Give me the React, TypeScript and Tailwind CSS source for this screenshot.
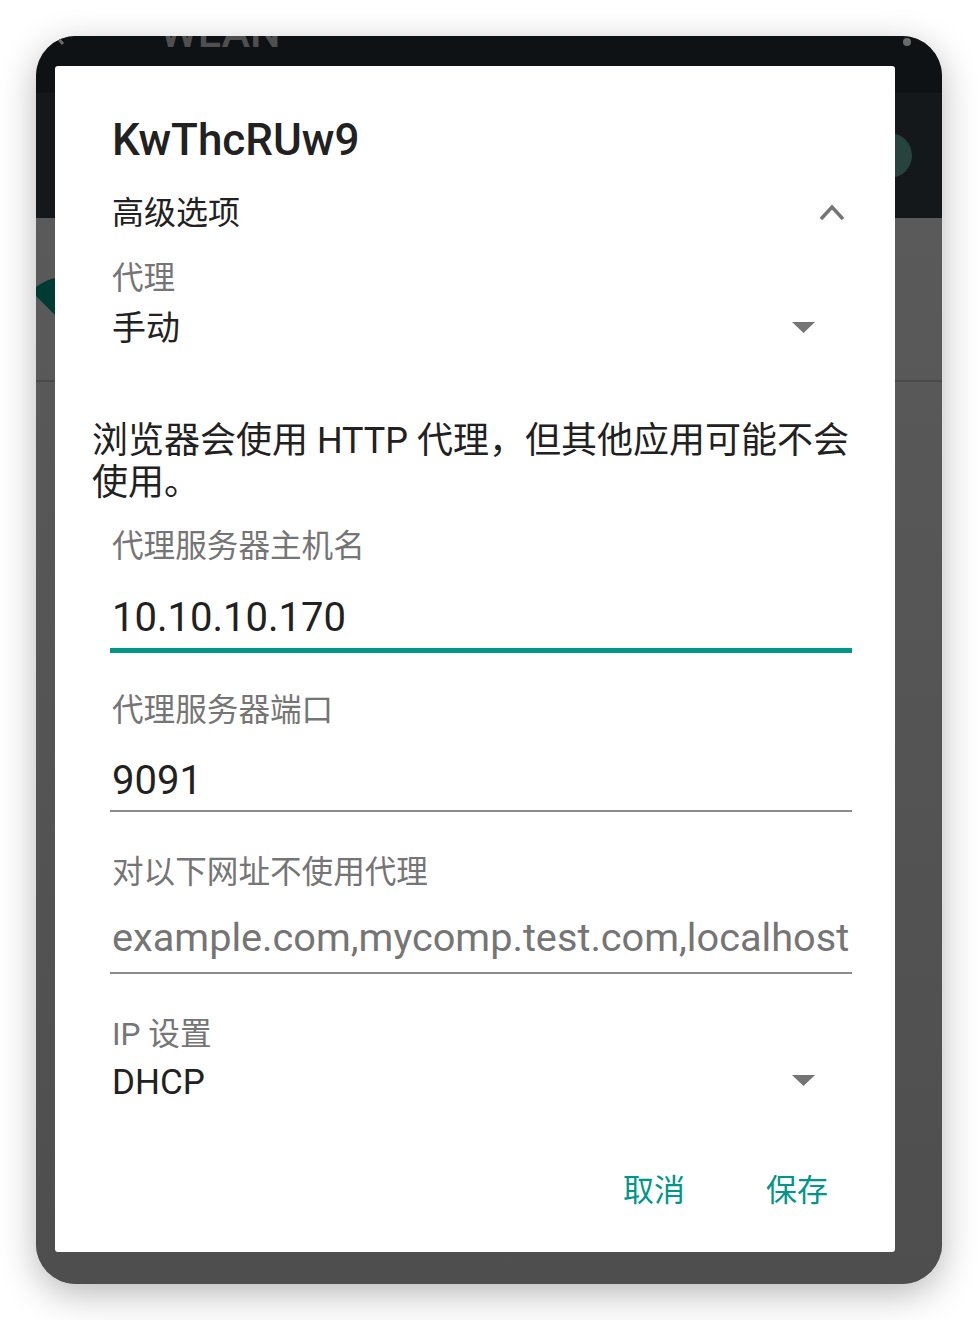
import type { ReactNode } from "react";

const font = "font-['Roboto','Noto_Sans_CJK_SC',sans-serif]";

function Label({ children, className = "" }: { children: ReactNode; className?: string }) {
  return <p className={`text-[31.6px] leading-[31px] text-[#757575] ${className}`}>{children}</p>;
}

function Underline({ active = false, className = "" }: { active?: boolean; className?: string }) {
  return (
    <div
      className={`-mx-[2px] ${active ? "h-[5px] bg-[#009688]" : "h-[2px] bg-[#8c8c8c]"} ${className}`}
    />
  );
}

function DropTriangle({ className = "" }: { className?: string }) {
  return (
    <svg width="24" height="12" viewBox="0 0 24 12" className={className}>
      <path d="M0 0 L23 0 L11.5 11 Z" fill="#757575" />
    </svg>
  );
}

export default function App() {
  return (
    <div className={`h-[1320px] w-[978px] bg-white pl-[36px] pt-[36px] ${font}`}>
      <div className="relative h-[1248px] w-[906px] overflow-hidden rounded-[40px] bg-[#555] shadow-[0_10px_36px_rgba(0,0,0,0.28)]">
        {/* dimmed screen behind the dialog */}
        <div className="flex h-full flex-col">
          <div className="flex h-[57px] items-start bg-[#0e1215]">
            <svg width="12" height="12" viewBox="0 0 12 12" className="ml-[20px] mt-[1px]">
              <path d="M1 0 L7 7" stroke="#6a6a6a" strokeWidth="3" />
            </svg>
            <span className="ml-[92px] mt-[-25px] text-[43px] font-medium leading-[43px] text-[#4f4f4f]">
              WLAN
            </span>
            <span className="ml-auto mr-[31px] mt-[2px] h-[8px] w-[8px] rounded-full bg-[#6b6b6b]" />
          </div>
          <div className="flex h-[125px] items-center justify-end bg-[#14181b]">
            <span className="mr-[30px] h-[45px] w-[45px] rounded-full bg-[#26443d]" />
          </div>
          <div className="flex-1 bg-gradient-to-b from-[#5a5a5a] to-[#4e4e4e]">
            <div className="h-[164px] border-b-2 border-[#4a4a4a] pt-[52px]">
              <svg width="100" height="70" viewBox="0 0 100 70" className="ml-[-20px]">
                <path d="M50.2 56.2 L15.2 21.2 A49.5 49.5 0 0 1 85.2 21.2 Z" fill="#003b33" />
              </svg>
            </div>
          </div>
        </div>

        {/* dialog */}
        <div className="absolute left-[19px] top-[30px] flex h-[1186px] w-[840px] flex-col rounded-[3px] bg-white pl-[57px] pr-[45px] pt-[52px]">
          <h1 className="text-[44px] font-medium leading-[44px] text-[#212121]">KwThcRUw9</h1>

          <div className="mt-[35px] flex items-center justify-between">
            <span className="text-[32px] leading-[32px] text-[#212121]">高级选项</span>
            <svg width="26" height="18" viewBox="0 0 26 18" className="mr-[5px] mb-[3px]">
              <path d="M2 16 L13 4 L24 16" stroke="#757575" strokeWidth="3.5" fill="none" />
            </svg>
          </div>

          <Label className="mt-[34px]">代理</Label>
          <div className="mt-[17px] flex items-center justify-between">
            <span className="text-[34px] leading-[34px] text-[#212121]">手动</span>
            <DropTriangle className="mr-[34px]" />
          </div>

          <p className="ml-[-20px] mt-[75px] w-[770px] text-[36px] leading-[42px] text-[#212121]">
            浏览器会使用 HTTP 代理，但其他应用可能不会使用。
          </p>

          <Label className="mt-[27px]">代理服务器主机名</Label>
          <p className="mt-[36px] text-[40px] leading-[40px] text-[#212121]">10.10.10.170</p>
          <Underline active className="mt-[10px]" />

          <Label className="mt-[42px]">代理服务器端口</Label>
          <p className="mt-[35px] text-[40px] leading-[40px] text-[#212121]">9091</p>
          <Underline className="mt-[9px]" />

          <Label className="mt-[45px]">对以下网址不使用代理</Label>
          <p className="mt-[30px] whitespace-nowrap text-[39.7px] leading-[40px] text-[#757575]">
            example.com,mycomp.test.com,localhost
          </p>
          <Underline className="mt-[14px]" />

          <Label className="mt-[45px]">IP 设置</Label>
          <div className="mt-[15px] flex items-start justify-between">
            <span className="text-[35px] leading-[35px] text-[#212121]">DHCP</span>
            <DropTriangle className="mr-[34px] mt-[10px]" />
          </div>

          <div className="mt-[75px] flex justify-end gap-[81px] pr-[22px] text-[31px] leading-[31px] text-[#009688]">
            <button type="button">取消</button>
            <button type="button">保存</button>
          </div>
        </div>
      </div>
    </div>
  );
}
